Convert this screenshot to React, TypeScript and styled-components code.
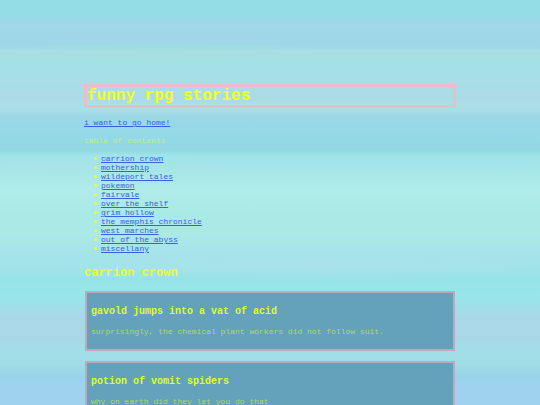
import React from "react";
import styled, { createGlobalStyle } from "styled-components";

const GlobalStyle = createGlobalStyle`
  * { box-sizing: border-box; }
  html {
    min-height: 100%;
    background:
      radial-gradient(ellipse 30% 3% at 12% 41%, #b4dfe655, transparent) fixed,
      radial-gradient(ellipse 40% 4% at 60% 66%, #b4dfe966, transparent) fixed,
      radial-gradient(ellipse 30% 2% at 30% 12.5%, #a2e2dd88, transparent) fixed,
      linear-gradient(
        to bottom,
        #93dde6 0%, #95dce7 4%, #9fd8e8 6%, #a0d6e8 9%, #9fd7e8 11.5%,
        #a8dee4 12.5%, #a3e1e5 16%, #a8dee5 20%, #abdce5 24%, #abdfe8 27%,
        #9cd8e6 29%, #94d9e7 33%, #92d7e2 37%, #9ee5ea 38.5%, #a1e3ea 40%,
        #a7e8e7 43%, #b0ebe9 47.5%, #a8eae6 53%, #abe8e6 58%, #a5e4e9 62%,
        #a2e4e9 66%, #95e3e7 69%, #98e5ea 73%, #a0dfe9 76%, #a9d9e8 78%,
        #a9d7e8 83%, #a3dde7 86%, #9fdde8 90%, #98d3e9 93%, #9ed2ef 95%,
        #9fd2ee 100%
      ) fixed;
  }
  body {
    margin: 0;
    font: 8px/9px "Liberation Mono", "Courier New", monospace;
  }
`;

const Page = styled.main`
  padding: 84px;
`;

const Title = styled.h1`
  margin: 0 0 10px;
  border: 3px solid #e8bccb;
  color: #f4ff1c;
  font-size: 16px;
  line-height: 18px;
`;

const Link = styled.a`
  color: #3a5fe0;
  text-decoration: underline;
`;

const Text = styled.p`
  margin: 0 0 9px;
  color: #bdf08a;
`;

const Contents = styled.ul`
  margin: 0 0 13px;
  padding-left: 10px;
  list-style: none;
`;

const Topic = styled.li`
  display: flex;
  align-items: center;
  gap: 4px;

  &::before {
    content: "";
    width: 3px;
    height: 3px;
    border-radius: 50%;
    background: #e0fb5a;
  }
`;

const SectionTitle = styled.h2`
  margin: 0 0 11px;
  color: #eaff26;
  font-size: 12px;
  line-height: 14px;
`;

const Card = styled.article`
  margin: 0 1px 10px;
  padding: 13px 4px;
  border: 2px solid #bcaabd;
  background: #64a1bb;
`;

const CardTitle = styled.h3`
  margin: 0 0 10px;
  color: #dcff2a;
  font-size: 10px;
  line-height: 11px;
`;

const CardText = styled.p`
  margin: 0;
  color: #aedb62;
`;

const topics = [
  "carrion crown",
  "mothership",
  "wildeport tales",
  "pokemon",
  "fairvale",
  "over the shelf",
  "grim hollow",
  "the memphis chronicle",
  "west marches",
  "out of the abyss",
  "miscellany",
];

const stories = [
  {
    title: "gavold jumps into a vat of acid",
    text: "surprisingly, the chemical plant workers did not follow suit.",
  },
  {
    title: "potion of vomit spiders",
    text: "why on earth did they let you do that",
  },
];

export default function App() {
  return (
    <>
      <GlobalStyle />
      <Page>
        <Title>funny rpg stories</Title>
        <Text>
          <Link href="#home">i want to go home!</Link>
        </Text>
        <Text>table of contents</Text>
        <Contents>
          {topics.map((topic) => (
            <Topic key={topic}>
              <Link href={`#${topic.replace(/ /g, "-")}`}>{topic}</Link>
            </Topic>
          ))}
        </Contents>
        <SectionTitle id="carrion-crown">carrion crown</SectionTitle>
        {stories.map((story) => (
          <Card key={story.title}>
            <CardTitle>{story.title}</CardTitle>
            <CardText>{story.text}</CardText>
          </Card>
        ))}
      </Page>
    </>
  );
}
